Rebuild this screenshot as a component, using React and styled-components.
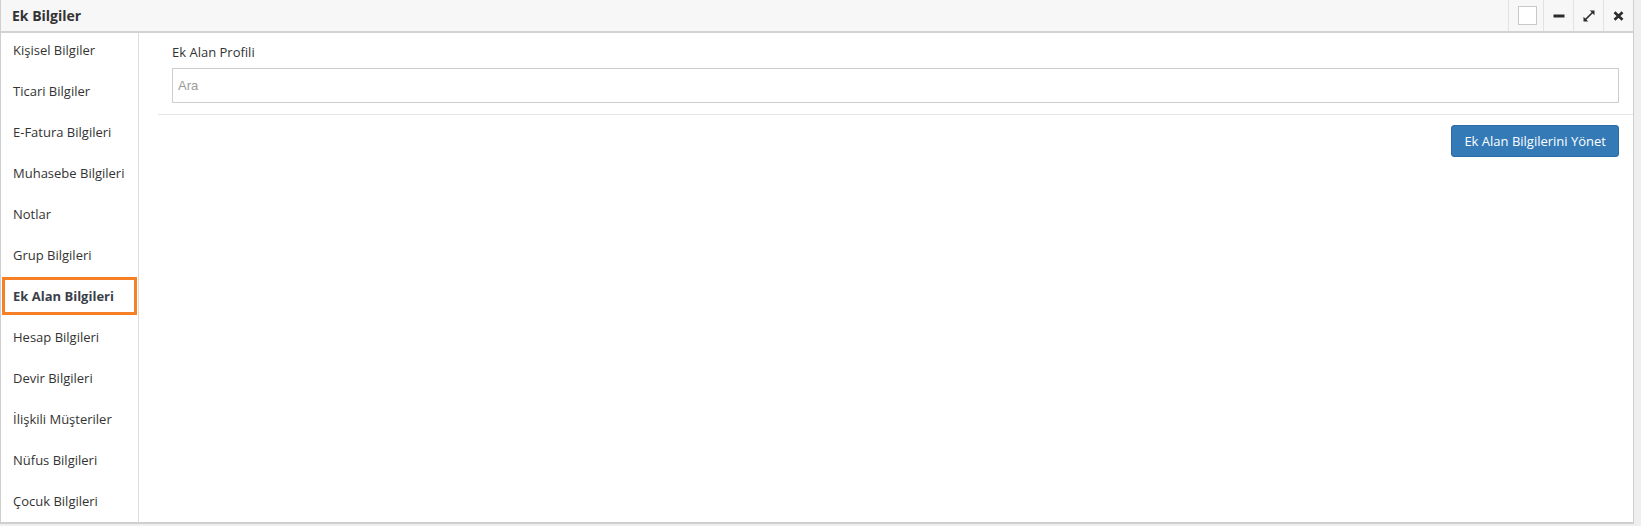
import React from 'react';
import styled, { createGlobalStyle } from 'styled-components';

const GlobalStyle = createGlobalStyle`
  html, body {
    margin: 0;
    padding: 0;
    background-color: #efefef;
  }
  body {
    font-family: "Open Sans", "Liberation Sans", Arial, sans-serif;
    font-size: 13px;
    color: #333;
  }
`;

const Panel = styled.div`
  width: 1634px;
  height: 524px;
  box-sizing: border-box;
  background-color: white;

  border-left: 1px solid #cfcfcf;
  border-right: 1px solid #cfcfcf;
  border-bottom: 2px solid #cfcfcf;

  display: flex;
  flex-direction: column;
`;
const Header = styled.div`
  height: 31px;
  flex: 0 0 auto;
  background-color: #f7f7f7;
  border-bottom: 2px solid #d2d2d2;

  display: flex;
  align-items: stretch;
`;
const Title = styled.div`
  flex: 1 0;
  padding-left: 11px;

  font-size: 14px;
  font-weight: 700;
  line-height: 31px;
  color: #333;
`;
const Tools = styled.div`
  display: flex;
  align-items: stretch;
`;
const ToolButton = styled.button`
  width: ${props => props.wide ? 35 : 30}px;
  padding: 0;
  background-color: inherit;
  border: none;
  border-left: 1px solid #e2e2e2;
  outline: none;
  cursor: pointer;

  display: flex;
  align-items: center;
  justify-content: center;
`;
const Square = styled.span`
  width: 17px;
  height: 17px;
  margin-left: 2px;
  background-color: white;
  border: 1px solid #c8c8c8;
`;
const Body = styled.div`
  flex: 1 0;
  display: flex;
  min-height: 0;
`;
const Sidebar = styled.ul`
  width: 137px;
  margin: 0;
  padding: 0;
  list-style: none;
  border-right: 1px solid #dcdcdc;
`;
const Item = styled.li`
  position: relative;
  height: 41px;
  box-sizing: border-box;
  padding: 8px 12px 0 12px;

  font-size: 13px;
  line-height: 18px;
  font-weight: ${props => (props.active ? 700 : 400)};
  color: ${props => (props.active ? '#3a3f4a' : '#333')};
  white-space: nowrap;
  cursor: pointer;

  &::after {
    content: '';
    display: ${props => (props.active ? 'block' : 'none')};
    position: absolute;
    top: -2px;
    left: 1px;
    width: 135px;
    height: 38px;
    box-sizing: border-box;
    border: 3px solid #f68026;
  }
`;
const Content = styled.div`
  flex: 1 0;
  padding: 10px 0 0 19px;
`;
const FormGroup = styled.div`
  padding: 0 14px;
`;
const Label = styled.label`
  display: block;
  margin-bottom: 7px;
  font-size: 13px;
  line-height: 18px;
  color: #333;
`;
const SearchInput = styled.input`
  display: block;
  width: 100%;
  height: 35px;
  box-sizing: border-box;
  margin: 0 0 11px;
  padding: 0 5px;

  font-family: "Liberation Sans", Arial, sans-serif;
  font-size: 13px;
  color: #333;

  border: 1px solid #cdcdcd;
  border-radius: 0;
  outline: none;

  &::placeholder {
    color: #9a9a9a;
  }
`;
const Divider = styled.hr`
  margin: 0;
  border: none;
  border-top: 1px solid #e5e5e5;
`;
const Actions = styled.div`
  padding: 10px 14px 0 0;
  display: flex;
  justify-content: flex-end;
`;
const PrimaryButton = styled.button`
  padding: 6px 12px;
  font-family: "Open Sans", "Liberation Sans", Arial, sans-serif;
  font-size: 13px;
  line-height: 18px;
  color: white;

  background-color: #337ab7;
  border: 1px solid #2e6da4;
  border-radius: 3px;
  outline: none;
  cursor: pointer;

  &:hover {
    background-color: #286090;
  }
`;

const MinusIcon = () => (
  <svg width="12" height="4" viewBox="0 0 12 4">
    <rect x="0.5" y="0.5" width="11" height="3" fill="#2b2b2b" />
  </svg>
);

const ExpandIcon = () => (
  <svg width="14" height="14" viewBox="0 0 14 14">
    <path d="M3.5 10.5 L10.5 3.5" stroke="#2b2b2b" strokeWidth="1.6" />
    <path d="M7.8 1.5 L12.5 1.5 L12.5 6.2 Z" fill="#2b2b2b" />
    <path d="M1.5 7.8 L1.5 12.5 L6.2 12.5 Z" fill="#2b2b2b" />
  </svg>
);

const CloseIcon = () => (
  <svg width="11" height="10" viewBox="0 0 11 10">
    <path d="M1.5 1.2 L9.5 8.8 M9.5 1.2 L1.5 8.8" stroke="#2b2b2b" strokeWidth="2.6" />
  </svg>
);

const menu = [
  'Kişisel Bilgiler',
  'Ticari Bilgiler',
  'E-Fatura Bilgileri',
  'Muhasebe Bilgileri',
  'Notlar',
  'Grup Bilgileri',
  'Ek Alan Bilgileri',
  'Hesap Bilgileri',
  'Devir Bilgileri',
  'İlişkili Müşteriler',
  'Nüfus Bilgileri',
  'Çocuk Bilgileri',
];

const App = () => (
  <>
    <GlobalStyle />
    <Panel>
      <Header>
        <Title>Ek Bilgiler</Title>
        <Tools>
          <ToolButton wide><Square /></ToolButton>
          <ToolButton><MinusIcon /></ToolButton>
          <ToolButton><ExpandIcon /></ToolButton>
          <ToolButton><CloseIcon /></ToolButton>
        </Tools>
      </Header>
      <Body>
        <Sidebar>
          {menu.map(label => (
            <Item key={label} active={label === 'Ek Alan Bilgileri'}>{label}</Item>
          ))}
        </Sidebar>
        <Content>
          <FormGroup>
            <Label>Ek Alan Profili</Label>
            <SearchInput placeholder="Ara" />
          </FormGroup>
          <Divider />
          <Actions>
            <PrimaryButton>Ek Alan Bilgilerini Yönet</PrimaryButton>
          </Actions>
        </Content>
      </Body>
    </Panel>
  </>
);

export default App;
